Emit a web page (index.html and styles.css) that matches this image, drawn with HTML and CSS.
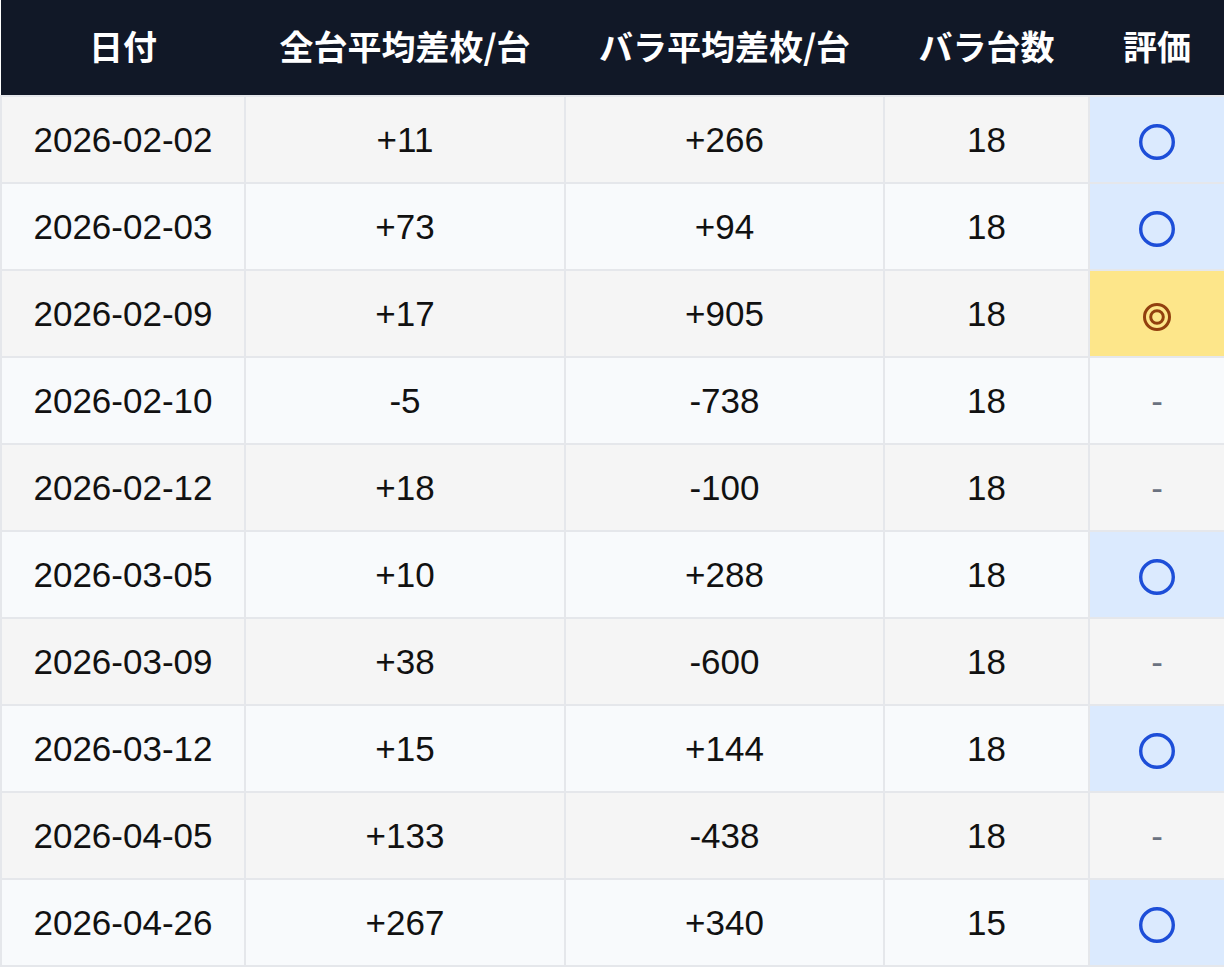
FILE: index.html
```html
<!DOCTYPE html>
<html lang="ja">
<head>
<meta charset="utf-8">
<link rel="stylesheet" href="styles.css">
</head>
<body>
<table class="tbl">
  <colgroup>
    <col class="c1"><col class="c2"><col class="c3"><col class="c4"><col class="c5">
  </colgroup>
  <thead>
    <tr><th>日付</th><th>全台平均差枚/台</th><th>バラ平均差枚/台</th><th>バラ台数</th><th>評価</th></tr>
  </thead>
  <tbody>
    <tr class="odd"><td>2026-02-02</td><td>+11</td><td>+266</td><td>18</td><td class="ev good"><svg class="mk" viewBox="0 0 36 36" aria-label="○"><circle cx="18" cy="18" r="16.3"/></svg></td></tr>
    <tr class="even"><td>2026-02-03</td><td>+73</td><td>+94</td><td>18</td><td class="ev good"><svg class="mk" viewBox="0 0 36 36" aria-label="○"><circle cx="18" cy="18" r="16.3"/></svg></td></tr>
    <tr class="odd"><td>2026-02-09</td><td>+17</td><td>+905</td><td>18</td><td class="ev best"><svg class="mk2" viewBox="0 0 28 28" aria-label="◎"><circle cx="14" cy="14" r="12.5"/><circle cx="14" cy="14" r="6.3"/></svg></td></tr>
    <tr class="even"><td>2026-02-10</td><td>-5</td><td>-738</td><td>18</td><td class="ev none">-</td></tr>
    <tr class="odd"><td>2026-02-12</td><td>+18</td><td>-100</td><td>18</td><td class="ev none">-</td></tr>
    <tr class="even"><td>2026-03-05</td><td>+10</td><td>+288</td><td>18</td><td class="ev good"><svg class="mk" viewBox="0 0 36 36" aria-label="○"><circle cx="18" cy="18" r="16.3"/></svg></td></tr>
    <tr class="odd"><td>2026-03-09</td><td>+38</td><td>-600</td><td>18</td><td class="ev none">-</td></tr>
    <tr class="even"><td>2026-03-12</td><td>+15</td><td>+144</td><td>18</td><td class="ev good"><svg class="mk" viewBox="0 0 36 36" aria-label="○"><circle cx="18" cy="18" r="16.3"/></svg></td></tr>
    <tr class="odd"><td>2026-04-05</td><td>+133</td><td>-438</td><td>18</td><td class="ev none">-</td></tr>
    <tr class="even"><td>2026-04-26</td><td>+267</td><td>+340</td><td>15</td><td class="ev good"><svg class="mk" viewBox="0 0 36 36" aria-label="○"><circle cx="18" cy="18" r="16.3"/></svg></td></tr>
  </tbody>
</table>
</body>
</html>
```
FILE: styles.css
```css
html, body {
  margin: 0;
  padding: 0;
  background: #ffffff;
}
.tbl {
  width: 1224px;
  border-collapse: collapse;
  table-layout: fixed;
  font-family: "Liberation Sans", Arial, "Noto Sans CJK JP", sans-serif;
  font-size: 35px;
  color: #111111;
}
.c1 { width: 244px; }
.c2 { width: 320px; }
.c3 { width: 319px; }
.c4 { width: 205px; }
.c5 { width: 136px; }
.tbl th {
  background: #111827;
  color: #ffffff;
  font-family: "Noto Sans CJK JP", sans-serif;
  font-weight: 700;
  font-size: 34px;
  height: 96px;
  padding: 0 0 5px 0;
  box-sizing: border-box;
  text-align: center;
  vertical-align: middle;
  border: none;
}
.tbl td {
  height: 85px;
  padding: 0;
  text-align: center;
  vertical-align: middle;
  border: 2px solid #e5e7eb;
}
.odd td { background: #f5f5f5; }
.even td { background: #f8fafc; }
.tbl td.good { background: #dbeafe; }
.tbl td.best { background: #fde68a; }
.tbl td.none { color: #6b7280; }
.mk {
  display: block;
  width: 36px;
  height: 36px;
  margin: 4px auto 0;
  fill: none;
  stroke: #1d4ed8;
  stroke-width: 3.4;
}
.mk2 {
  display: block;
  width: 28px;
  height: 28px;
  margin: 7px auto 0;
  fill: none;
  stroke: #92400e;
  stroke-width: 3;
}
```
